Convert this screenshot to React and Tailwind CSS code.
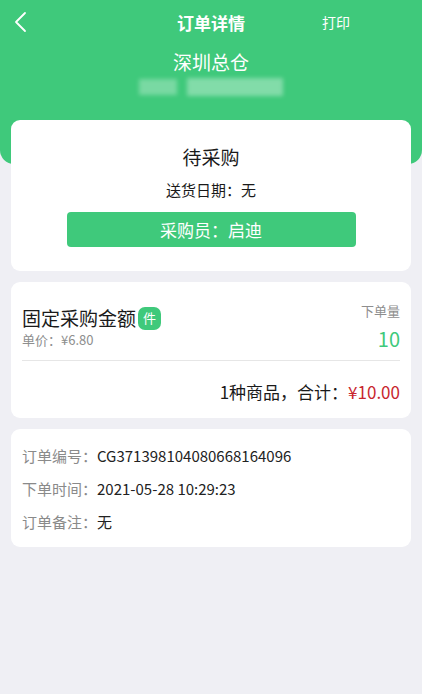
import React from 'react';

const font = { fontFamily: '"Noto Sans CJK SC", "Noto Sans", sans-serif' };

const InfoRow = ({ label, value }) => (
  <div className="flex text-[15px] leading-[20px]">
    <span className="text-[#8a8a8a]">{label}：</span>
    <span className="text-[#222]">{value}</span>
  </div>
);

const App = () => {
  return (
    <div className="min-h-[694px] w-full bg-[#efeff4]" style={font}>
      {/* green header */}
      <div className="h-[164px] bg-[#3fc97b] rounded-b-[14px] text-white">
        <div className="grid grid-cols-[1fr_auto_1fr] items-center h-[44px]">
          <div className="pl-[14px] flex items-center">
            <svg width="14" height="22" viewBox="0 0 14 22" fill="none">
              <path d="M11 2 L2 11 L11 20" stroke="white" strokeWidth="1.8" strokeLinecap="round" strokeLinejoin="round" />
            </svg>
          </div>
          <div className="text-[17px] font-bold leading-none">订单详情</div>
          <div className="pl-[77px] text-[14px] leading-none">打印</div>
        </div>
        <div className="text-center text-[19px] leading-[26px] mt-[5px]">深圳总仓</div>
        <div className="flex justify-center mt-[3px]">
          <div className="flex items-center gap-[10px] blur-[2px]">
            <div className="w-[38px] h-[16px] bg-white/30"></div>
            <div className="w-[96px] h-[18px] bg-white/35"></div>
          </div>
        </div>
      </div>

      <div className="px-[11px] -mt-[44px] flex flex-col gap-[11px]">
        {/* status card */}
        <div className="bg-white rounded-[9px] pt-[24px] pb-[24px] flex flex-col items-center">
          <div className="text-[19px] leading-[26px] text-[#1a1a1a]">待采购</div>
          <div className="text-[15px] leading-[20px] text-[#1a1a1a] mt-[10px]">送货日期：无</div>
          <div className="mt-[12px] w-[289px] h-[35px] bg-[#3fc97b] rounded-[4px] flex items-center justify-center text-white text-[17px]">
            采购员：启迪
          </div>
        </div>

        {/* goods card */}
        <div className="bg-white rounded-[9px] px-[11px] pt-[23px] pb-[15px]">
          <div className="flex justify-between items-start">
            <div>
              <div className="flex items-center h-[26px]">
                <span className="text-[19px] leading-[26px] text-[#1a1a1a]">固定采购金额</span>
                <span className="ml-[2px] w-[23px] h-[23px] rounded-[7px] bg-[#3fc97b] text-white text-[13px] flex items-center justify-center">件</span>
              </div>
              <div className="text-[13px] leading-[16px] text-[#8e8e8e] mt-[1px]">单价：¥6.80</div>
            </div>
            <div className="flex flex-col items-end -mt-[3px]">
              <div className="text-[13px] leading-[18px] text-[#8e8e8e]">下单量</div>
              <div className="text-[20px] leading-[26px] text-[#3fc97b] mt-[6px]">10</div>
            </div>
          </div>
          <div className="h-px bg-[#e6e6e6] mt-[8px]"></div>
          <div className="text-right text-[17px] leading-[22px] text-[#1a1a1a] mt-[20px]">
            1种商品，合计：<span className="text-[#c8262e]">¥10.00</span>
          </div>
        </div>

        {/* info card */}
        <div className="bg-white rounded-[9px] px-[11px] pt-[17px] pb-[15px] flex flex-col gap-[13px]">
          <InfoRow label="订单编号" value="CG371398104080668164096" />
          <InfoRow label="下单时间" value="2021-05-28 10:29:23" />
          <InfoRow label="订单备注" value="无" />
        </div>
      </div>
    </div>
  );
};

export default App;
